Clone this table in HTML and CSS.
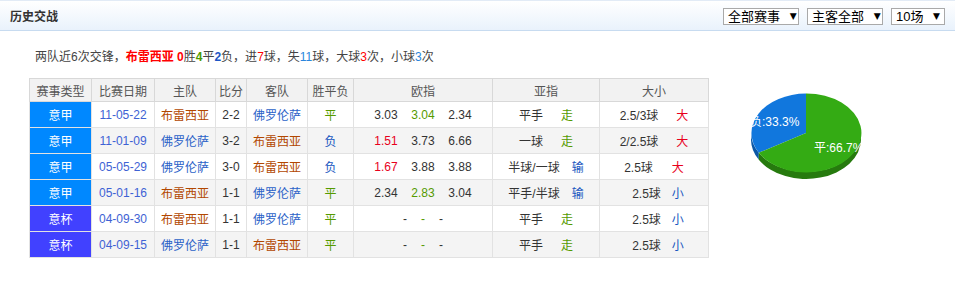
FILE: index.html
```html
<!DOCTYPE html>
<html lang="zh">
<head>
<meta charset="utf-8">
<title>历史交战</title>
<link rel="stylesheet" href="styles.css">
</head>
<body>
<div class="header">
  <div class="title">历史交战</div>
  <div class="filters">
    <div class="sel sel-a">全部赛事 <span class="arr">▼</span></div>
    <div class="sel sel-a">主客全部 <span class="arr">▼</span></div>
    <div class="sel sel-b">10场 <span class="arr">▼</span></div>
  </div>
</div>
<div class="content">
  <div class="summary">两队近6次交锋，<b class="red">布雷西亚 0</b>胜<b class="green">4</b>平<b class="blue">2</b>负，进<span class="red">7</span>球，失<span class="lblue">11</span>球，大球<span class="red">3</span>次，小球<span class="lblue">3</span>次</div>
  <div class="main">
    <table class="tbl">
      <colgroup>
        <col class="c1"><col class="c2"><col class="c3"><col class="c4"><col class="c5"><col class="c6"><col class="c7"><col class="c8"><col class="c9">
      </colgroup>
      <thead>
        <tr><th>赛事类型</th><th>比赛日期</th><th>主队</th><th>比分</th><th>客队</th><th>胜平负</th><th>欧指</th><th>亚指</th><th>大小</th></tr>
      </thead>
      <tbody>
        <tr>
          <td class="lg a">意甲</td><td class="date">11-05-22</td><td class="brs">布雷西亚</td><td>2-2</td><td class="flo">佛罗伦萨</td><td class="g">平</td>
          <td><span class="o">3.03</span><span class="o g">3.04</span><span class="o">2.34</span></td>
          <td>平手<span class="rs g w18">走</span></td>
          <td>2.5/3球<span class="rs r w18">大</span></td>
        </tr>
        <tr class="alt">
          <td class="lg a">意甲</td><td class="date">11-01-09</td><td class="flo">佛罗伦萨</td><td>3-2</td><td class="brs">布雷西亚</td><td class="b">负</td>
          <td><span class="o r">1.51</span><span class="o">3.73</span><span class="o">6.66</span></td>
          <td>一球<span class="rs g w18">走</span></td>
          <td>2/2.5球<span class="rs r w18">大</span></td>
        </tr>
        <tr>
          <td class="lg a">意甲</td><td class="date">05-05-29</td><td class="flo">佛罗伦萨</td><td>3-0</td><td class="brs">布雷西亚</td><td class="b">负</td>
          <td><span class="o r">1.67</span><span class="o">3.88</span><span class="o">3.88</span></td>
          <td>半球/一球<span class="rs b w12">输</span></td>
          <td>2.5球<span class="rs r w19">大</span></td>
        </tr>
        <tr class="alt">
          <td class="lg a">意甲</td><td class="date">05-01-16</td><td class="brs">布雷西亚</td><td>1-1</td><td class="flo">佛罗伦萨</td><td class="g">平</td>
          <td><span class="o">2.34</span><span class="o g">2.83</span><span class="o">3.04</span></td>
          <td>平手/半球<span class="rs b w12">输</span></td>
          <td class="sm">2.5球<span class="rs b w11">小</span></td>
        </tr>
        <tr>
          <td class="lg c">意杯</td><td class="date">04-09-30</td><td class="brs">布雷西亚</td><td>1-1</td><td class="flo">佛罗伦萨</td><td class="g">平</td>
          <td><span class="d">-</span><span class="d g">-</span><span class="d">-</span></td>
          <td>平手<span class="rs g w18">走</span></td>
          <td class="sm">2.5球<span class="rs b w11">小</span></td>
        </tr>
        <tr class="alt">
          <td class="lg c">意杯</td><td class="date">04-09-15</td><td class="flo">佛罗伦萨</td><td>1-1</td><td class="brs">布雷西亚</td><td class="g">平</td>
          <td><span class="d">-</span><span class="d g">-</span><span class="d">-</span></td>
          <td>平手<span class="rs g w18">走</span></td>
          <td class="sm">2.5球<span class="rs b w11">小</span></td>
        </tr>
      </tbody>
    </table>
    <svg class="pie" width="116" height="92" viewBox="0 0 116 92">
      <path d="M55 42 L7.8 61.75 L7.8 68.75 A55 39.5 0 0 1 0 49 L0 42 A55 39.5 0 0 0 7.8 61.75 Z" fill="#0c58a6"/>
      <path d="M110 42 L110 49 A55 39.5 0 0 1 7.8 68.75 L7.8 61.75 A55 39.5 0 0 0 110 42 Z" fill="#267a0e"/>
      <path d="M55 42 L55 2.5 A55 39.5 0 0 0 7.8 61.75 Z" fill="#1177dd"/>
      <path d="M55 42 L7.8 61.75 A55 39.5 0 1 0 55 2.5 Z" fill="#34ab14"/>
      <text x="-1" y="35" class="lbl">负:33.3%</text>
      <text x="63" y="61" class="lbl">平:66.7%</text>
    </svg>
  </div>
</div>
</body>
</html>
```
FILE: styles.css
```css
body {
  margin: 0;
  background: #fff;
  font-family: "Liberation Sans", "Noto Sans CJK SC", sans-serif;
  font-size: 12px;
  color: #333;
}
.header {
  display: flex;
  align-items: center;
  justify-content: space-between;
  height: 29px;
  border-top: 1px solid #e2ebf6;
  border-bottom: 1px solid #c7dbf0;
  background: linear-gradient(to bottom, #ffffff, #e9f2fc);
  padding: 0 10px;
}
.title {
  font-weight: bold;
  font-size: 12px;
  color: #333;
}
.filters {
  display: flex;
  gap: 8px;
  margin-top: 2px;
}
.sel {
  box-sizing: border-box;
  height: 17px;
  border: 1px solid #a9a9a9;
  background: #fff;
  color: #000;
  font-size: 13px;
  line-height: 15px;
  padding-left: 4px;
  display: flex;
  align-items: center;
  white-space: pre;
}
.sel-a { width: 76px; }
.sel-b { width: 54px; }
.arr {
  font-family: "DejaVu Sans", sans-serif;
  font-size: 9px;
  margin-left: 6px;
}
.content {
  padding-left: 29px;
}
.summary {
  margin-top: 16px;
  height: 20px;
  line-height: 20px;
  padding-left: 6px;
  color: #444;
}
.summary b { font-weight: bold; }
.red { color: #f00; }
.green { color: #4c9a00; }
.blue { color: #1d56c6; }
.lblue { color: #2a86dc; }
.main {
  display: flex;
  align-items: flex-start;
  margin-top: 11px;
}
.tbl {
  border-collapse: collapse;
  table-layout: fixed;
  width: 680px;
  border: 1px solid #d4d4d4;
}
.c1 { width: 62px; }
.c2 { width: 63px; }
.c3 { width: 61px; }
.c4 { width: 31px; }
.c5 { width: 61px; }
.c6 { width: 46px; }
.c7 { width: 139px; }
.c8 { width: 107px; }
.c9 { width: 109px; }
.tbl th {
  height: 22px;
  padding: 0;
  background: #f2f2f2;
  color: #555;
  font-weight: normal;
  border: 1px solid #d8d8d8;
  text-align: center;
}
.tbl td {
  height: 25px;
  padding: 0;
  border: 1px solid #e2e2e2;
  text-align: center;
  white-space: nowrap;
}
.tbl tr.alt td { background: #f4f4f4; }
.tbl td.lg { color: #fff; }
.tbl td.a, .tbl tr.alt td.a { background: #0088ff; }
.tbl td.c, .tbl tr.alt td.c { background: #4141ff; }
.date { color: #3e62d4; }
.brs { color: #b24700; }
.flo { color: #2b62c8; }
.g { color: #559a00; }
.b { color: #1856c0; }
.r { color: #e8001c; }
.o {
  display: inline-block;
  width: 37px;
  text-align: center;
}
.d {
  display: inline-block;
  width: 18px;
  text-align: center;
}
.rs { display: inline-block; }
.w18 { margin-left: 18px; }
.w19 { margin-left: 19px; }
.w12 { margin-left: 12px; }
.w11 { margin-left: 11px; }
.sm { padding-left: 8px !important; }
.pie {
  display: block;
  margin-left: 42px;
  margin-top: 13px;
}
.lbl {
  fill: #fff;
  font-size: 12px;
  font-family: "Liberation Sans", "Noto Sans CJK SC", sans-serif;
}
```
